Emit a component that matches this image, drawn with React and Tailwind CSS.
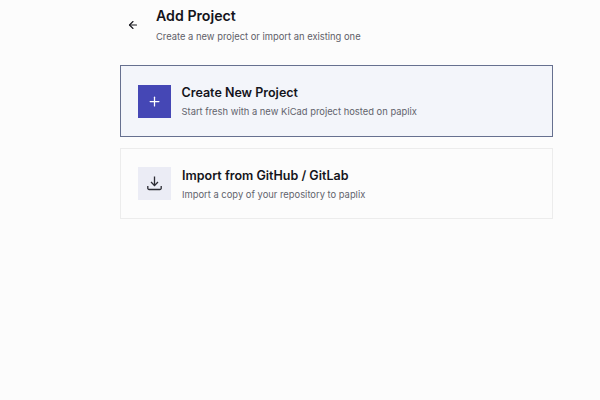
import { ArrowLeft, Plus } from "lucide-react";

const App = () => {
  return (
    <div className="h-[400px] w-[600px] overflow-hidden bg-[#fcfcfc] pl-[120px] pr-[47px] font-['Inter',sans-serif]">
      {/* Header */}
      <div className="flex h-[65px] items-start">
        <button className="ml-[7px] mt-[19px] text-[#16161d]">
          <ArrowLeft size={12} strokeWidth={2.25} />
        </button>
        <div className="ml-[17px] pt-[6px]">
          <h1 className="text-[14.2px] font-semibold leading-[20px] text-[#14141b]">Add Project</h1>
          <p className="mt-[4px] text-[9.4px] leading-[14px] text-[#5f6068]">
            Create a new project or import an existing one
          </p>
        </div>
      </div>

      {/* Create card */}
      <div className="flex h-[72px] items-center border-[1.5px] border-[#66708f] bg-[#f3f5fa] pl-[16.5px]">
        <div className="flex size-[33px] items-center justify-center bg-[#4547b5] text-white">
          <Plus size={15} strokeWidth={2} />
        </div>
        <div className="ml-[11px] pt-[1px]">
          <h2 className="text-[12.5px] font-semibold leading-[18px] text-[#14141b]">Create New Project</h2>
          <p className="mt-[3px] text-[9.4px] leading-[14px] text-[#62636c]">
            Start fresh with a new KiCad project hosted on paplix
          </p>
        </div>
      </div>

      {/* Import card */}
      <div className="mt-[11px] flex h-[71px] items-center border border-[#ececec] bg-[#fcfcfc] pl-[17px]">
        <div className="flex size-[33px] items-center justify-center bg-[#ebecf5] text-[#2b2b33]">
          <svg width="17" height="17" viewBox="0 0 17 17" fill="none" stroke="currentColor" strokeWidth="1.3">
            <path d="M8.5 1.5v9" />
            <path d="M5 7l3.5 3.5L12 7" />
            <path d="M1.8 11v2.2a1.3 1.3 0 0 0 1.3 1.3h10.8a1.3 1.3 0 0 0 1.3-1.3V11" />
          </svg>
        </div>
        <div className="ml-[11px] pt-[1px]">
          <h2 className="text-[12.5px] font-semibold leading-[18px] text-[#14141b]">Import from GitHub / GitLab</h2>
          <p className="mt-[3px] text-[9.4px] leading-[14px] text-[#62636c]">
            Import a copy of your repository to paplix
          </p>
        </div>
      </div>
    </div>
  );
};

export default App;
